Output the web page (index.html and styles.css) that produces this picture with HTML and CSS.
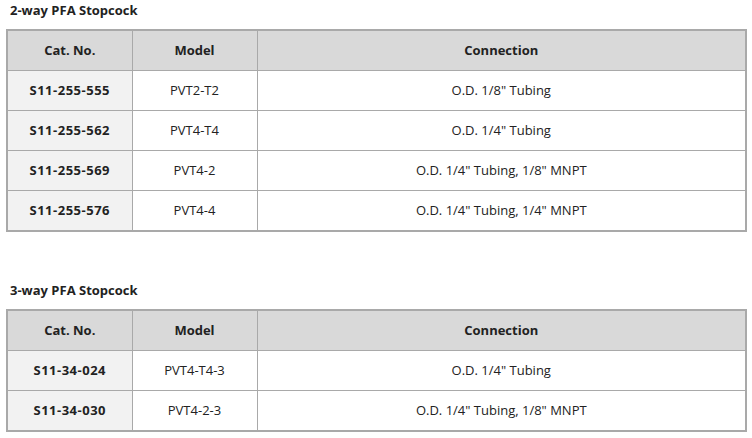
FILE: index.html
```html
<!DOCTYPE html>
<html>
<head>
<meta charset="utf-8">
<link rel="stylesheet" href="styles.css">
</head>
<body>
<div class="page">
  <section class="block">
    <h2 class="title">2-way PFA Stopcock</h2>
    <table class="spec">
      <colgroup><col class="c1"><col class="c2"><col class="c3"></colgroup>
      <thead>
        <tr><th>Cat. No.</th><th>Model</th><th>Connection</th></tr>
      </thead>
      <tbody>
        <tr><td class="cat">S11-255-555</td><td>PVT2-T2</td><td>O.D. 1/8" Tubing</td></tr>
        <tr><td class="cat">S11-255-562</td><td>PVT4-T4</td><td>O.D. 1/4" Tubing</td></tr>
        <tr><td class="cat">S11-255-569</td><td>PVT4-2</td><td>O.D. 1/4" Tubing, 1/8" MNPT</td></tr>
        <tr><td class="cat">S11-255-576</td><td>PVT4-4</td><td>O.D. 1/4" Tubing, 1/4" MNPT</td></tr>
      </tbody>
    </table>
  </section>
  <section class="block second">
    <h2 class="title">3-way PFA Stopcock</h2>
    <table class="spec">
      <colgroup><col class="c1"><col class="c2"><col class="c3"></colgroup>
      <thead>
        <tr><th>Cat. No.</th><th>Model</th><th>Connection</th></tr>
      </thead>
      <tbody>
        <tr><td class="cat">S11-34-024</td><td>PVT4-T4-3</td><td>O.D. 1/4" Tubing</td></tr>
        <tr><td class="cat">S11-34-030</td><td>PVT4-2-3</td><td>O.D. 1/4" Tubing, 1/8" MNPT</td></tr>
      </tbody>
    </table>
  </section>
</div>
</body>
</html>
```

FILE: styles.css
```css
html, body {
  margin: 0;
  padding: 0;
  background: #fff;
}
body {
  font-family: "Open Sans", "Noto Sans", "Noto Sans CJK KR", sans-serif;
  font-size: 13px;
  color: #222;
}
.page {
  padding: 0 5px 0 6px;
}
.title {
  margin: 0 0 9px 0;
  padding-left: 4px;
  font-size: 13px;
  font-weight: 700;
  line-height: 20px;
  color: #222;
}
.second {
  margin-top: 48px;
}
.spec {
  width: 741px;
  border-collapse: collapse;
  table-layout: fixed;
  border: 2px solid #a9a9a9;
}
.c1 { width: 125px; }
.c2 { width: 125px; }
.spec th,
.spec td {
  border: 1px solid #a9a9a9;
  height: 37px;
  padding: 0 0 2px 0;
  text-align: center;
  vertical-align: middle;
  font-weight: 400;
}
.spec th {
  background: #d9d9d9;
  font-weight: 700;
}
.spec td.cat {
  background: #f2f2f2;
  font-weight: 700;
  letter-spacing: 0.5px;
}
```
